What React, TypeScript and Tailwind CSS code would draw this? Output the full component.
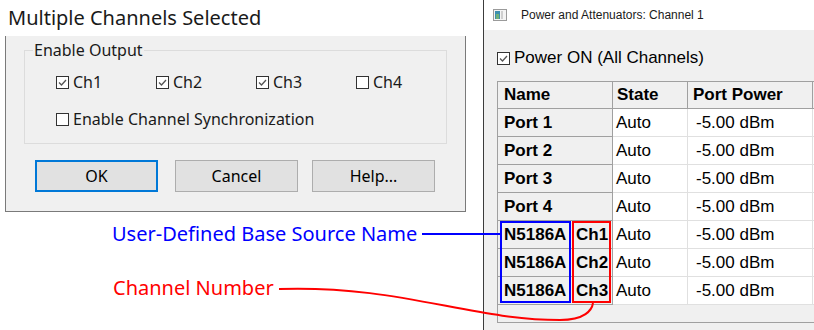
import React from 'react';

const ui = { fontFamily: '"Noto Sans", "Open Sans", sans-serif' };
const ms = { fontFamily: '"Liberation Sans", Arial, sans-serif' };

const Check: React.FC<{ checked?: boolean }> = ({ checked }) => (
  <span className="inline-flex h-[13px] w-[13px] shrink-0 items-center justify-center border border-[#333333] bg-white">
    {checked && (
      <svg width="11" height="11" viewBox="0 0 11 11">
        <path d="M2 5.5 L4.5 8 L9 3" fill="none" stroke="#555555" strokeWidth="1.3" />
      </svg>
    )}
  </span>
);

const Button: React.FC<{ label: string; primary?: boolean; className?: string }> = ({ label, primary, className }) => (
  <div
    className={`flex h-[32px] w-[123px] items-center justify-center bg-[#e1e1e1] text-[16px] text-black ${
      primary ? 'border-2 border-[#0078d7]' : 'border border-[#adadad]'
    } ${className ?? ''}`}
  >
    {label}
  </div>
);

const rows = [
  { name: 'Port 1' },
  { name: 'Port 2' },
  { name: 'Port 3' },
  { name: 'Port 4' },
  { name: 'N5186A', ch: 'Ch1' },
  { name: 'N5186A', ch: 'Ch2' },
  { name: 'N5186A', ch: 'Ch3' },
];

const App: React.FC = () => {
  return (
    <div className="relative flex h-[330px] w-[814px] overflow-hidden bg-white">
      {/* left dialog + labels */}
      <div className="w-[483px] shrink-0" style={ui}>
        <div className="flex h-[36px] items-center pl-[8px] text-[20px] text-[#1a1a1a]">Multiple Channels Selected</div>
        <div className="ml-[5px] h-[176px] w-[461px] border-x border-b border-[#7a7a7a] bg-[#f0f0f0] pt-[14px]">
          <div className="relative mx-[18px] h-[94px] border border-[#dcdcdc]">
            <span className="absolute left-[8px] top-[-12px] bg-[#f0f0f0] px-[1px] text-[16px] leading-[22px] text-[#1a1a1a]">
              Enable Output
            </span>
            <div className="flex pl-[31px] pt-[24px] text-[16px] text-[#1a1a1a]">
              {['Ch1', 'Ch2', 'Ch3', 'Ch4'].map((c, i) => (
                <div key={c} className="flex w-[100px] shrink-0 items-center gap-[4px] leading-[14px]">
                  <Check checked={i < 3} />
                  <span>{c}</span>
                </div>
              ))}
            </div>
            <div className="flex items-center gap-[4px] pl-[31px] pt-[23px] text-[16px] leading-[14px] text-[#1a1a1a]">
              <Check />
              <span>Enable Channel Synchronization</span>
            </div>
          </div>
          <div className="flex pl-[29px] pt-[16px]">
            <Button label="OK" primary />
            <Button label="Cancel" className="ml-[17px]" />
            <Button label="Help..." className="ml-[14px]" />
          </div>
        </div>
        <div className="pl-[112px] pt-[9px] text-[20px] leading-[26px] text-[#0000ff]">User-Defined Base Source Name</div>
        <div className="pl-[113px] pt-[28px] text-[20px] leading-[26px] text-[#ff0000]">Channel Number</div>
      </div>

      {/* right window */}
      <div className="flex h-[330px] flex-1 flex-col border-l border-[#3c3c3c] bg-[#f0f0f0]">
        <div className="flex h-[30px] items-center bg-white pl-[9px]" style={ms}>
          <svg width="14" height="12" viewBox="0 0 14 12">
            <rect x="0.5" y="0.5" width="13" height="11" fill="#f4f4f4" stroke="#9a9a9a" />
            <rect x="2" y="2" width="5" height="8" fill="#3d8fb0" />
            <rect x="3" y="5" width="3" height="5" fill="#6fb07a" />
            <rect x="8" y="2" width="2" height="8" fill="#cfcfcf" />
          </svg>
          <span className="ml-[14px] text-[12px] text-[#1a1a1a]">Power and Attenuators: Channel 1</span>
        </div>
        <div className="flex items-center gap-[4px] pl-[13px] pt-[21px] text-[17px] leading-[14px] text-black" style={ms}>
          <Check checked />
          <span>Power ON (All Channels)</span>
        </div>
        <div className="ml-[13px] mt-[16px] h-[242px] overflow-hidden border-l border-b border-[#a0a0a0] bg-[#f0f0f0]" style={ms}>
          <div className="flex h-[28px] border-t border-[#a0a0a0] text-[17px] font-bold text-black">
            <div className="flex w-[115px] shrink-0 items-center border-r border-b border-[#a0a0a0] pl-[6px]">Name</div>
            <div className="flex w-[75px] shrink-0 items-center border-r border-b border-[#a0a0a0] pl-[4px]">State</div>
            <div className="flex w-[125px] shrink-0 items-center border-r border-b border-[#a0a0a0] pl-[5px]">Port Power</div>
            <div className="flex w-[40px] shrink-0 border-b border-[#a0a0a0]" />
          </div>
          {rows.map((r, i) => (
            <div key={i} className="flex h-[28px] text-[17px] text-black">
              <div className="flex w-[115px] shrink-0 items-center border-r border-b border-[#a0a0a0] pl-[6px] font-bold">
                <span className={r.ch ? 'w-[72px]' : ''}>{r.name}</span>
                {r.ch && <span>{r.ch}</span>}
              </div>
              <div className="flex w-[75px] shrink-0 items-center border-r border-b border-[#e0e0e0] bg-white pl-[3px]">Auto</div>
              <div className="flex w-[125px] shrink-0 items-center border-r border-b border-[#e0e0e0] bg-white pl-[8px]">-5.00 dBm</div>
              <div className="w-[40px] shrink-0 border-b border-[#e0e0e0] bg-white" />
            </div>
          ))}
        </div>
      </div>

      {/* annotation overlay */}
      <svg className="pointer-events-none absolute left-0 top-0" width="814" height="330" viewBox="0 0 814 330">
        <line x1="422" y1="234" x2="501" y2="234" stroke="#0000ff" strokeWidth="2" />
        <rect x="501" y="222" width="69" height="80" fill="none" stroke="#0000ff" strokeWidth="2" />
        <rect x="573" y="222" width="37" height="80" fill="none" stroke="#ff0000" strokeWidth="2" />
        <path
          d="M279 289 C 400 285, 470 320, 560 320 C 585 320, 592 310, 593 303"
          fill="none"
          stroke="#ff0000"
          strokeWidth="2"
        />
      </svg>
    </div>
  );
};

export default App;
